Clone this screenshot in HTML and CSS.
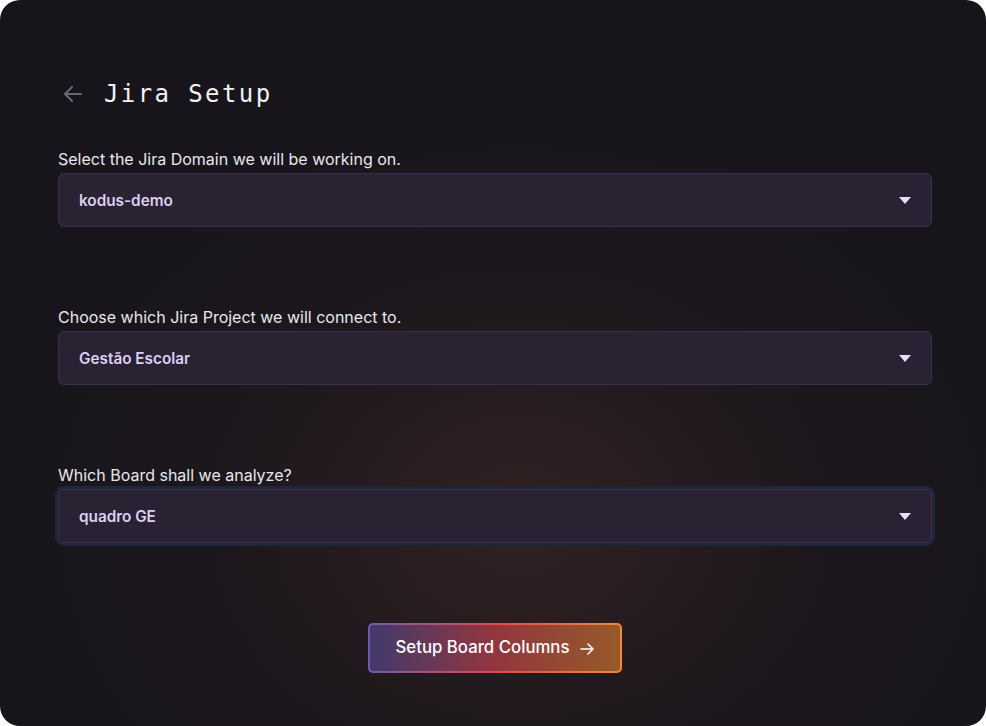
FILE: index.html
```html
<!DOCTYPE html>
<html>
<head>
<meta charset="utf-8">
<link rel="stylesheet" href="styles.css">
</head>
<body>
<main class="card">
  <header class="title-row">
    <svg class="back" width="22" height="22" viewBox="0 0 22 22" fill="none" stroke="#6c6478" stroke-width="2" stroke-linecap="round" stroke-linejoin="round"><path d="M19 11H3M10 4L3 11l7 7"/></svg>
    <h1 class="title">Jira Setup</h1>
  </header>

  <section class="field">
    <label class="label">Select the Jira Domain we will be working on.</label>
    <div class="select"><span class="value">kodus-demo</span><span class="caret"></span></div>
  </section>

  <section class="field">
    <label class="label">Choose which Jira Project we will connect to.</label>
    <div class="select"><span class="value">Gestão Escolar</span><span class="caret"></span></div>
  </section>

  <section class="field">
    <label class="label">Which Board shall we analyze?</label>
    <div class="select focused"><span class="value">quadro GE</span><span class="caret"></span></div>
  </section>

  <div class="actions">
    <button class="btn">Setup Board Columns
      <svg width="16" height="16" viewBox="0 0 16 16" fill="none" stroke="#fff" stroke-width="1.6" stroke-linecap="round" stroke-linejoin="round"><path d="M2 8h12M9 3l5 5-5 5"/></svg>
    </button>
  </div>
</main>
</body>
</html>
```

FILE: styles.css
```css
html, body {
  margin: 0;
  padding: 0;
  background: #ffffff;
}
body {
  width: 986px;
  height: 726px;
  overflow: hidden;
  font-family: "Inter", "Noto Sans", sans-serif;
}
.card {
  box-sizing: border-box;
  width: 986px;
  height: 726px;
  border-radius: 20px;
  background:
    radial-gradient(ellipse 520px 420px at 520px 520px, rgba(60, 38, 38, 0.75), rgba(40, 28, 32, 0.35) 55%, rgba(22, 20, 26, 0) 100%),
    #17151b;
  padding: 78px 54px 0 58px;
  display: flex;
  flex-direction: column;
}
.title-row {
  display: flex;
  align-items: center;
  gap: 20px;
  height: 32px;
  margin-bottom: 39px;
}
.back {
  margin-left: 4px;
}
.title {
  margin: 0;
  font-family: "DejaVu Sans Mono", monospace;
  font-weight: normal;
  font-size: 24px;
  letter-spacing: 2.4px;
  color: #f2f2f4;
  line-height: 32px;
}
.field {
  display: flex;
  flex-direction: column;
  gap: 4px;
  margin-bottom: 80px;
}
.label {
  font-size: 16px;
  line-height: 20px;
  color: #e9e7ec;
}
.select {
  box-sizing: border-box;
  height: 54px;
  border: 1px solid #3a304c;
  border-radius: 6px;
  background: #292232;
  display: flex;
  align-items: center;
  justify-content: space-between;
  padding: 0 20px 0 20px;
}
.select.focused {
  box-shadow: 0 0 0 3px #1e2637;
}
.value {
  font-size: 15.3px;
  font-weight: 600;
  color: #dccff2;
}
.caret {
  width: 0;
  height: 0;
  border-left: 6px solid transparent;
  border-right: 6px solid transparent;
  border-top: 7px solid #e6e0f6;
}
.actions {
  display: flex;
  justify-content: center;
}
.btn {
  box-sizing: border-box;
  width: 254px;
  height: 50px;
  border-radius: 5px;
  border: 2px solid transparent;
  background:
    linear-gradient(90deg, #413a6c 0%, #93363f 50%, #965a28 100%) padding-box,
    linear-gradient(90deg, #7458b0 0%, #e0484a 50%, #f28a35 100%) border-box;
  color: #ffffff;
  font-family: "Inter", sans-serif;
  font-size: 16.8px;
  font-weight: 500;
  display: flex;
  align-items: center;
  justify-content: center;
  gap: 9px;
  padding: 0 0 2px 0;
}
.btn svg {
  margin-top: 3px;
}
```
